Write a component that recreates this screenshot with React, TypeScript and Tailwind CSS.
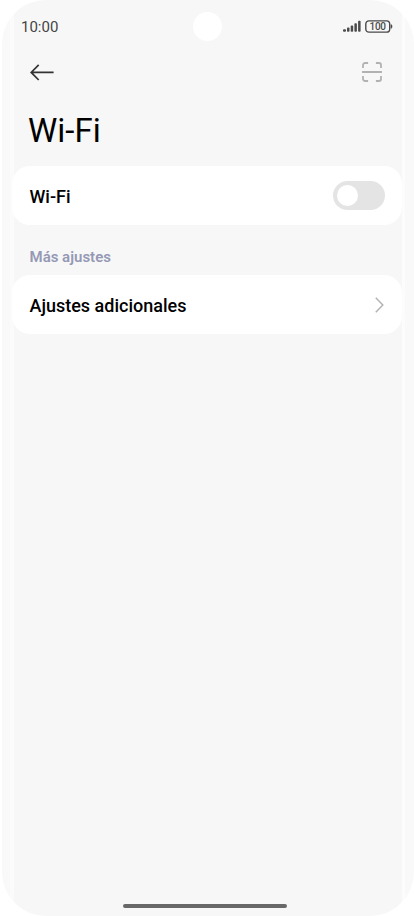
import type { ReactNode } from "react";

const SignalIcon = () => (
  <svg width="18" height="12" viewBox="0 0 18 12" fill="#4a4a4a">
    <rect x="0" y="9.3" width="3" height="2.4" rx="1" />
    <rect x="4" y="7.6" width="2.5" height="4.1" rx="0.8" />
    <rect x="7.7" y="5.6" width="2.5" height="6.1" rx="0.8" />
    <rect x="11.4" y="3.3" width="2.5" height="8.4" rx="0.8" />
    <rect x="15.1" y="0.8" width="2.5" height="10.9" rx="0.8" />
  </svg>
);

const Battery = () => (
  <svg width="28" height="13" viewBox="0 0 28 13" fill="none">
    <rect x="0.8" y="0.9" width="23.9" height="11.2" rx="3.2" stroke="#4a4a4a" strokeWidth="1.4" />
    <path d="M26 4.6c1.4.3 1.4 3.5 0 3.8z" fill="#4a4a4a" stroke="#4a4a4a" strokeWidth="0.6" />
    <text
      x="12.8"
      y="10"
      textAnchor="middle"
      textLength="16.4"
      fill="#4a4a4a"
      className="text-[10px] font-medium"
    >
      100
    </text>
  </svg>
);

const BackIcon = () => (
  <svg width="24" height="17" viewBox="0 0 24 17" fill="none" stroke="#333" strokeWidth="1.7">
    <path d="M8.7 0.8 1.2 8.4l7.5 7.6M1.2 8.4h22.4" />
  </svg>
);

const ScanIcon = () => (
  <svg width="20" height="20" viewBox="0 0 20 20" fill="none" stroke="#b2b2b2" strokeWidth="1.8">
    <path d="M1 6.1V3a2 2 0 0 1 2-2h3.1M13.9 1H17a2 2 0 0 1 2 2v3.1M19 13.9V17a2 2 0 0 1-2 2h-3.1M6.1 19H3a2 2 0 0 1-2-2v-3.1M0 10h20" />
  </svg>
);

const ChevronIcon = () => (
  <svg width="9" height="16" viewBox="0 0 9 16" fill="none" stroke="#b3b3b3" strokeWidth="1.5">
    <path d="M0.8 0.8 7.8 8l-7 7.2" />
  </svg>
);

const SettingRow = ({ label, children }: { label: string; children: ReactNode }) => (
  <div className="flex h-[59px] items-center justify-between rounded-[18px] bg-white pr-[17px] pl-[17.5px]">
    <span className="pt-0.5 text-[18px] leading-6 font-medium text-black">{label}</span>
    {children}
  </div>
);

const App = () => {
  return (
    <div className="h-[916px] w-[414px] overflow-hidden bg-white pl-[2px] font-[Roboto,sans-serif]">
      <div className="relative flex h-full flex-col rounded-[44px] bg-[linear-gradient(to_right,#f9f9f9_8px,#fbfbfb_8px,#fbfbfb_12px,#f7f7f7_12px,#f7f7f7_400px,#fcfcfc_400px,#fcfcfc_403px,#f9f9f9_403px)] pr-3 pl-[10px]">
        <div className="absolute top-[12px] left-[191px] size-[29px] rounded-full bg-white" />

        <header className="flex h-[52px] items-center justify-between pr-[9px] pl-[9px]">
          <span className="pt-0.5 text-[15px] text-[#444]">10:00</span>
          <div className="flex items-center gap-1">
            <SignalIcon />
            <Battery />
          </div>
        </header>

        <nav className="flex h-10 items-center justify-between pr-5 pl-[18px]">
          <button aria-label="Atrás">
            <BackIcon />
          </button>
          <button aria-label="Escanear">
            <ScanIcon />
          </button>
        </nav>

        <h1 className="mt-[19px] pl-4 text-[33px] leading-10 text-black">Wi-Fi</h1>

        <main className="mt-[15px]">
          <SettingRow label="Wi-Fi">
            <button
              role="switch"
              aria-checked="false"
              aria-label="Wi-Fi"
              className="flex h-[29px] w-[52px] items-center rounded-full bg-[#e4e4e4] pl-1"
            >
              <span className="size-[21px] rounded-full bg-white" />
            </button>
          </SettingRow>

          <h2 className="mt-[22px] mb-2 pl-[17.5px] text-[15px] leading-5 font-semibold text-[#9599b5]">
            Más ajustes
          </h2>

          <SettingRow label="Ajustes adicionales">
            <div className="pr-px">
              <ChevronIcon />
            </div>
          </SettingRow>
        </main>

        <footer className="mt-auto flex justify-center pr-1 pb-2">
          <div className="h-1 w-[164px] rounded-full bg-[#686868]" />
        </footer>
      </div>
    </div>
  );
};

export default App;
